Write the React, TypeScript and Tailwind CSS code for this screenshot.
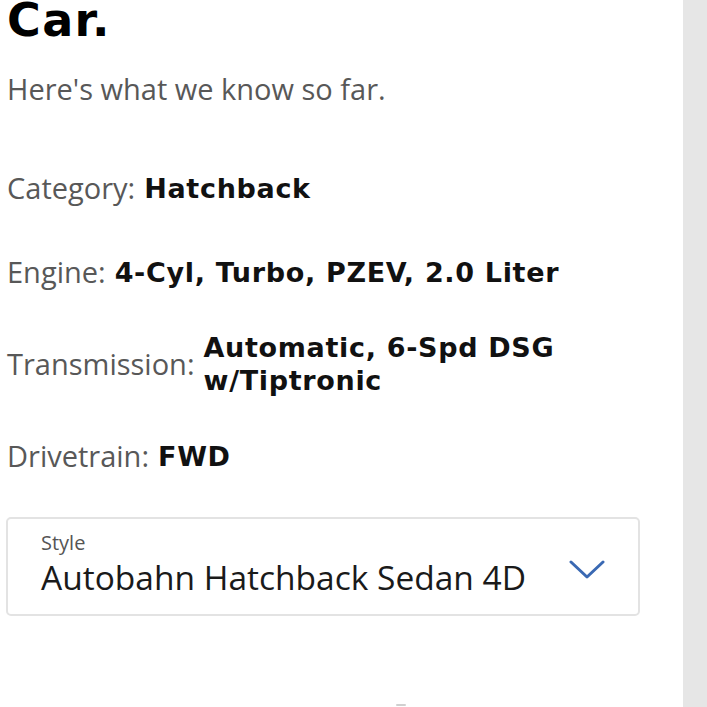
import React from "react"

const details = [
  { label: "Category:", value: "Hatchback" },
  { label: "Engine:", value: "4-Cyl, Turbo, PZEV, 2.0 Liter" },
  { label: "Transmission:", value: "Automatic, 6-Spd DSG w/Tiptronic" },
  { label: "Drivetrain:", value: "FWD" },
]

const sans = "font-['Open_Sans',sans-serif]"
const geo = "font-['DejaVu_Sans',sans-serif]"

function DetailRow({ label, value }: { label: string; value: string }) {
  return (
    <div className="flex items-center min-h-[50px]">
      <span className={`${sans} text-[29px] leading-[40px] text-[#585858] whitespace-nowrap`}>{label}</span>
      <span className={`${geo} ml-[9px] min-w-0 text-[27px] leading-[33px] font-bold tracking-[0.025em] text-[#111]`}>
        {value}
      </span>
    </div>
  )
}

export default function App() {
  return (
    <div className="flex w-[707px] h-[707px] overflow-hidden bg-white">
      <div className="flex-1 flex flex-col pl-[7px] pr-[43px]">
        <h1 className={`${geo} text-[46px] leading-none font-bold tracking-[0.03em] text-black -mt-[3px]`}>Car.</h1>
        <p className={`${sans} mt-[26px] text-[29px] leading-[40px] text-[#585858]`}>Here's what we know so far.</p>

        <div className="mt-[54px] flex flex-col gap-[34px]">
          {details.map((d) => (
            <DetailRow key={d.label} label={d.label} value={d.value} />
          ))}
        </div>

        {/* style picker */}
        <div className="mt-[36px] -ml-[1px] h-[99px] border-2 border-[#e3e3e3] rounded-[5px] flex items-start pl-[33px] pr-[33px] pt-[13px]">
          <div className={`${sans} flex-1 flex flex-col`}>
            <span className="text-[20px] leading-[22px] text-[#555]">Style</span>
            <span className="text-[33.5px] leading-[46px] text-[#1a1a1a]">Autobahn Hatchback Sedan 4D</span>
          </div>
          <svg width="36" height="20" viewBox="0 0 36 20" className="mt-[28px]" fill="none">
            <polyline points="2,2 18,17 34,2" stroke="#3a69b3" strokeWidth="3" strokeLinecap="round" strokeLinejoin="round" />
          </svg>
        </div>

        <div className="mt-auto mb-[1px] self-start ml-[389px] w-[10px] h-[2px] rounded-full bg-[#d0d0d0]" />
      </div>
      <div className="w-[24px] bg-[#e6e6e6]" />
    </div>
  )
}
